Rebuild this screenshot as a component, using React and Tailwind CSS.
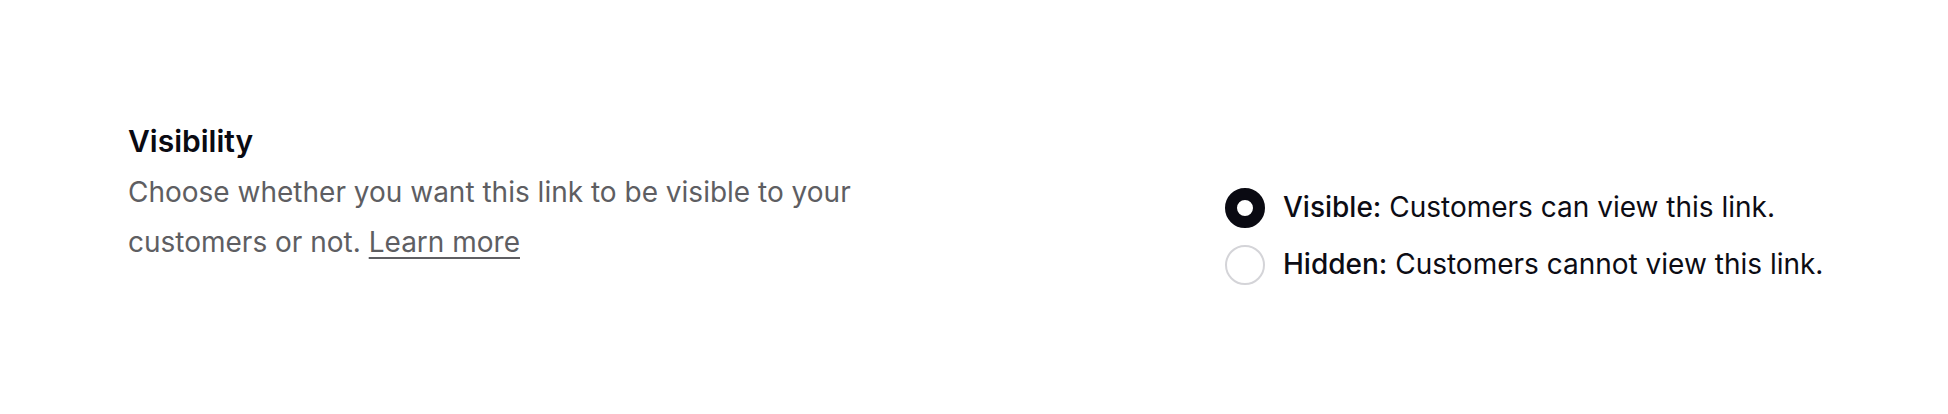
import React from "react";

export default function App() {
  return (
    <div className="w-[1948px] h-[414px] bg-white" style={{ fontFamily: "Inter, 'Noto Sans', sans-serif" }}>
      <div className="flex pl-[128px] pt-[123px]">
        <div className="w-[1097px] shrink-0">
          <h2 className="text-[30px] leading-[36px] font-semibold text-[#0a0a12]">Visibility</h2>
          <p className="mt-[8px] max-w-[760px] text-[28px] leading-[50px] text-[#5e5e62]">
            Choose whether you want this link to be visible to your customers or not.{" "}
            <a className="underline underline-offset-[5px] decoration-[2px]" href="#">Learn more</a>
          </p>
        </div>
        <div className="flex flex-col gap-[17px] pt-[65px]">
          <label className="flex items-center gap-[18px]">
            <span className="w-[40px] h-[40px] rounded-full border-[12px] border-[#0a0a12] bg-white shrink-0" />
            <span className="text-[28px] leading-[40px] text-[#0c0c14] -mt-[3px] whitespace-nowrap">
              <span className="font-medium">Visible:</span> Customers can view this link.
            </span>
          </label>
          <label className="flex items-center gap-[18px]">
            <span className="w-[40px] h-[40px] rounded-full border-[2px] border-[#d4d4d8] bg-white shrink-0" />
            <span className="text-[28px] leading-[40px] text-[#0c0c14] -mt-[3px] whitespace-nowrap">
              <span className="font-medium">Hidden:</span> Customers cannot view this link.
            </span>
          </label>
        </div>
      </div>
    </div>
  );
}
